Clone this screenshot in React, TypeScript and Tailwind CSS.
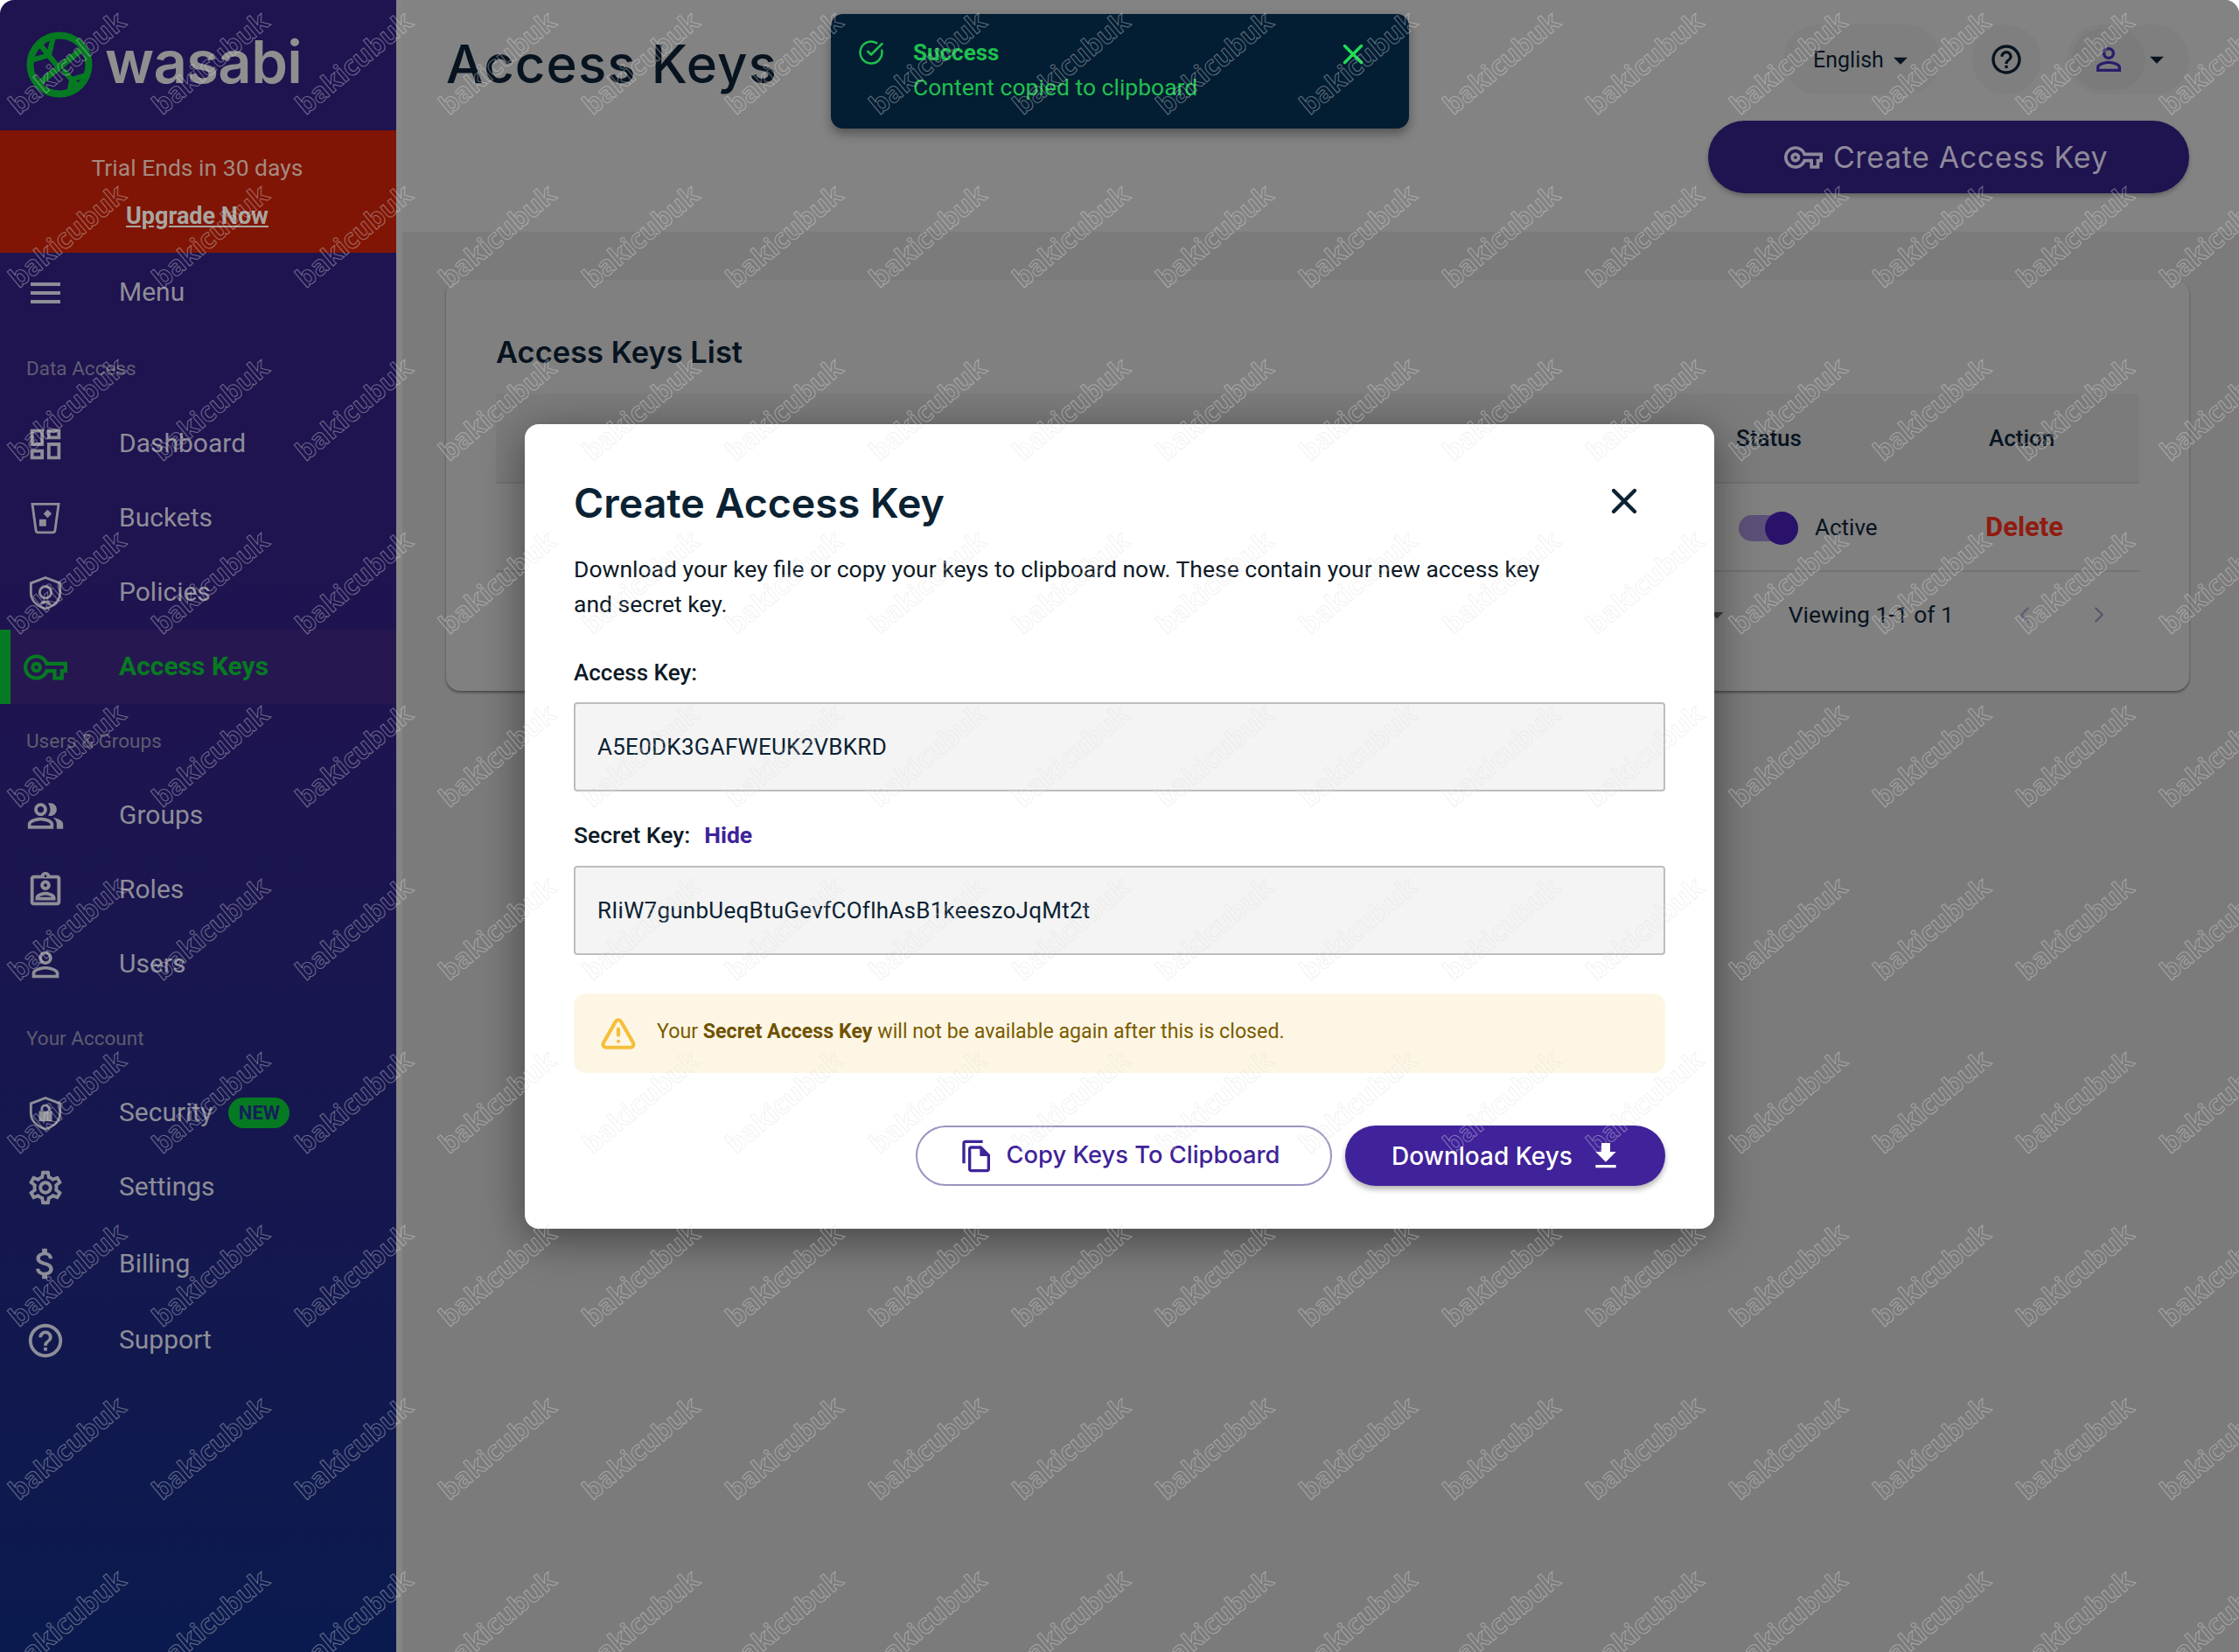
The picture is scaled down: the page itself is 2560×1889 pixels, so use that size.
import React from "react";
import { CircleCheckBig, TriangleAlert, X, ChevronLeft, ChevronRight } from "lucide-react";
import {
  MdOutlineDashboard, MdOutlinePeopleAlt, MdOutlineSettings, MdAttachMoney, MdHelpOutline,
  MdOutlineAssignmentInd, MdPersonOutline, MdOutlineVpnKey, MdOutlineFileCopy, MdFileDownload, MdArrowDropDown,
} from "react-icons/md";

const Hamburger = () => (
  <svg width="34" height="24" viewBox="0 0 34 24" fill="currentColor"><rect y="0" width="34" height="4" /><rect y="10" width="34" height="4" /><rect y="20" width="34" height="4" /></svg>
);
const Bucket = () => (
  <svg width="38" height="38" viewBox="0 0 24 24" fill="none" stroke="currentColor" strokeWidth="1.8"><path d="M2.5 1.5h19l-2.6 19a1.6 1.6 0 0 1-1.6 1.5H6.7a1.6 1.6 0 0 1-1.6-1.5z" /><path d="M13.5 5.5l3 3-3 3-3-3z" fill="currentColor" stroke="none" /><rect x="7.5" y="12.5" width="5" height="5" fill="currentColor" stroke="none" /></svg>
);
const ShieldEye = () => (
  <svg width="40" height="44" viewBox="0 0 24 24" fill="none" stroke="currentColor" strokeWidth="1.7"><path d="M12 1.5l10 3.8v6.5c0 5.4-4.2 9.2-10 11-5.800-1.800-10-5.600-10-11V5.300z" /><circle cx="12" cy="11.500" r="4" /><path d="M9 20c.5-2.500 5.500-2.500 6 0" /></svg>
);
const ShieldLock = () => (
  <svg width="40" height="46" viewBox="0 0 24 24" fill="none" stroke="currentColor" strokeWidth="1.7"><path d="M12 1.500l10 3.800v6.500c0 5.400-4.200 9.200-10 11-5.800-1.800-10-5.600-10-11V5.300z" /><rect x="7.500" y="10.500" width="9" height="7" fill="currentColor" stroke="none" /><path d="M9.500 10.500V9a2.500 2.500 0 0 1 5 0v1.500" /></svg>
);

type Item = { label: string; icon?: React.ReactNode; active?: boolean; badge?: boolean; section?: boolean; tall?: boolean; first?: boolean };
const items: Item[] = [
  { label: "Menu", icon: <Hamburger /> },
  { label: "Data Access", section: true, first: true },
  { label: "Dashboard", icon: <MdOutlineDashboard size={46} /> },
  { label: "Buckets", icon: <Bucket /> },
  { label: "Policies", icon: <ShieldEye /> },
  { label: "Access Keys", icon: <MdOutlineVpnKey size={50} />, active: true },
  { label: "Users & Groups", section: true },
  { label: "Groups", icon: <MdOutlinePeopleAlt size={44} /> },
  { label: "Roles", icon: <MdOutlineAssignmentInd size={46} /> },
  { label: "Users", icon: <MdPersonOutline size={46} /> },
  { label: "Your Account", section: true },
  { label: "Security", icon: <ShieldLock />, badge: true },
  { label: "Settings", icon: <MdOutlineSettings size={46} /> },
  { label: "Billing", icon: <MdAttachMoney size={46} />, tall: true },
  { label: "Support", icon: <MdHelpOutline size={46} /> },
];

const head = "font-['Inter',sans-serif]";

function Sidebar() {
  return (
    <aside className="w-[453px] shrink-0 flex flex-col bg-gradient-to-b from-[#1f1350] via-[#1f1350] via-35% to-[#0a1a4e] text-[#8e8e98]">
      <div className="h-[149px] flex items-center pl-[30px] gap-[14px] pb-[2px]">
        <svg width="76" height="76" viewBox="0 0 76 76" fill="none" stroke="#067a22">
          <circle cx="38" cy="38" r="33.500" strokeWidth="8" />
          <path d="M14 60L64 20" strokeWidth="7" />
          <path d="M36 40L15 14M26 27L31 6M26 27L6 33M42 44L62 66M52 55L49 72M52 55L71 49" strokeWidth="6" />
        </svg>
        <span className="font-['Inter',sans-serif] font-semibold text-[67px] leading-none text-[#8f8f8f] -mt-[6px] tracking-[-0.01em]">wasabi</span>
      </div>
      <div className="h-[140px] bg-[#801505] flex flex-col items-center text-[#a38a80] font-['Roboto',sans-serif] text-[26.5px] -ml-[2px]">
        <span className="mt-[26px] leading-[34px]">Trial Ends in 30 days</span>
        <span className="mt-[21px] leading-[34px] font-bold text-[27px] underline text-[#a9a5a0]">Upgrade Now</span>
      </div>
      <nav className="mt-[3px] flex flex-col font-['Roboto',sans-serif]">
        {items.map((it) =>
          it.section ? (
            <div key={it.label} className={`flex items-center pl-[30px] text-[22.5px] text-[#5e5c70] ${it.first ? "h-[88px] pt-[2px]" : "h-[85px]"}`}>{it.label}</div>
          ) : (
            <div key={it.label} className={`flex items-center relative text-[30px] ${it.tall ? "h-[90px]" : "h-[85px]"} ${it.active ? "bg-[#271750] text-[#067a22] font-bold" : ""}`}>
              {it.active && <span className="absolute left-0 top-0 bottom-0 w-[12px] bg-[#067a22]" />}
              <span className="w-[104px] shrink-0 flex justify-center">{it.icon}</span>
              <span className="ml-[32px] -mt-[2px]">{it.label}</span>
              {it.badge && <span className="ml-[18px] h-[35px] w-[70px] rounded-full bg-[#067a22] text-[#14205a] font-bold text-[22px] flex items-center justify-center">NEW</span>}
            </div>
          )
        )}
      </nav>
    </aside>
  );
}

function Header() {
  return (
    <header className="h-[265px] bg-[#838383] flex justify-between pl-[50px] pr-[57px]">
      <h1 className={`${head} mt-[38px] font-medium text-[60px] leading-[70px] text-[#07131f] tracking-[0.018em]`}>Access Keys</h1>
      <div className="flex flex-col items-end pt-[28px]">
        <div className="flex items-center font-['Roboto',sans-serif] text-[25px] text-[#07131f] h-[80px]">
          <div className="w-[180px] h-[80px] rounded-full bg-[#7f7f7f] flex items-center pl-[34px] pt-[2px]">English<MdArrowDropDown size={38} className="-mr-2" /></div>
          <div className="ml-[36px] w-[78px] h-[80px] rounded-full bg-[#7f7f7f] flex items-center justify-center"><MdHelpOutline size={40} /></div>
          <div className="ml-[30px] w-[140px] h-[80px] rounded-full bg-[#7f7f7f] flex items-center pl-[6px]">
            <span className="w-[84px] h-[70px] rounded-full bg-[#7b7b7b] flex items-center justify-center text-[#2a1c6b]"><MdPersonOutline size={42} /></span>
            <MdArrowDropDown size={38} className="-ml-[6px]" />
          </div>
        </div>
        <button className={`${head} mt-[30px] w-[550px] h-[83px] rounded-full bg-[#1f1350] text-[#8e8a9a] text-[34px] flex items-center justify-center gap-[12px] shadow-[0_3px_5px_rgba(0,0,0,.25)] tracking-[0.018em] pr-[6px]`}>
          <MdOutlineVpnKey size={44} />Create Access Key
        </button>
      </div>
    </header>
  );
}

function Card() {
  return (
    <section className="mt-[55px] ml-[50px] mr-[57px] h-[470px] rounded-[16px] bg-[#808080] shadow-[0_2px_3px_rgba(0,0,0,.4)] px-[57px] font-['Roboto',sans-serif] text-[#07131f]">
      <h2 className={`${head} pt-[62px] leading-[42px] text-[34.5px] font-semibold`}>Access Keys List</h2>
      <div className="mt-[26px] h-[103px] bg-[#7b7b7b] border-b-2 border-[#737373] flex justify-end items-center text-[26px] font-medium pt-[2px]">
        <span className="w-[289px]">Status</span>
        <span className="w-[172px]">Action</span>
      </div>
      <div className="h-[101px] border-b-2 border-[#737373] flex justify-end items-center text-[26px]">
        <div className="w-[289px] flex items-center pl-[3px] pt-[2px]">
          <span className="relative w-[68px] h-[30px] rounded-full bg-[#5c5078]">
            <span className="absolute right-0 -top-[4px] w-[38px] h-[38px] rounded-full bg-[#2a126b]" />
          </span>
          <span className="ml-[19px]">Active</span>
        </div>
        <span className="w-[176px] -ml-[4px] pt-[2px] text-[#8f1c10] font-bold text-[31px]">Delete</span>
      </div>
      <div className="h-[97px] flex justify-end items-center text-[26.5px]">
        <MdArrowDropDown size={36} className="text-[#3d3d3d] mr-[64px]" />
        <span>Viewing 1-1 of 1</span>
        <ChevronLeft size={30} strokeWidth={1.8} className="ml-[66px] text-[#5e5e74]" />
        <ChevronRight size={30} strokeWidth={1.8} className="ml-[55px] mr-[31px] text-[#55556c]" />
      </div>
    </section>
  );
}

function Field({ value }: { value: string }) {
  return (
    <div className="h-[102px] bg-[#f4f4f4] border-2 border-[#bdbdbd] rounded-[4px] flex items-center pl-[25px] text-[26px] text-[#0b2233] tracking-[0.01em]">{value}</div>
  );
}

function Modal() {
  return (
    <div className="absolute left-[600px] top-[485px] w-[1360px] h-[920px] bg-white rounded-[16px] shadow-[0_12px_50px_rgba(0,0,0,.45)] px-[56px] font-['Roboto',sans-serif] text-[#0e1a26]">
      <div className="flex justify-between items-center pt-[60px]">
        <h2 className={`${head} text-[46.5px] leading-[60px] font-semibold text-[#0b2233]`}>Create Access Key</h2>
        <X size={48} strokeWidth={2.2} className="mr-[23px] text-[#0b2233] -mt-[4px]" />
      </div>
      <p className="mt-[26px] w-[1130px] text-[26.5px] leading-[40px]">
        Download your key file or copy your keys to clipboard now. These contain your new access key and secret key.
      </p>
      <div className="mt-[38px] text-[26px] leading-[40px] font-medium">Access Key:</div>
      <div className="mt-[14px]"><Field value="A5E0DK3GAFWEUK2VBKRD" /></div>
      <div className="mt-[30px] text-[26.500px] leading-[40px] font-medium">Secret Key:<span className="ml-[16px] text-[#40229a] font-bold">Hide</span></div>
      <div className="mt-[15px]"><Field value="RIiW7gunbUeqBtuGevfCOflhAsB1keeszoJqMt2t" /></div>
      <div className="mt-[44px] h-[91px] rounded-[14px] bg-[#fef6e5] flex items-center pl-[30px] text-[23.200px] text-[#7a5c00] pb-[4px]">
        <TriangleAlert size={42} strokeWidth={2.4} className="text-[#f5bf3a] mt-[4px]" />
        <span className="ml-[23px]">Your <b className="font-bold text-[#6f5200]">Secret Access Key</b> will not be available again after this is closed.</span>
      </div>
      <div className="mt-[60px] flex justify-end gap-[15px]">
        <button className={`${head} w-[476px] h-[69px] rounded-full border-2 border-[#9c93c0] text-[#3f2399] text-[27.3px] flex items-center justify-center gap-[14px] font-medium pr-[10px]`}>
          <MdOutlineFileCopy size={40} />Copy Keys To Clipboard
        </button>
        <button className={`${head} w-[366px] h-[69px] rounded-full bg-[#40229a] text-white text-[28px] flex items-center justify-center gap-[18px] font-medium shadow-[0_4px_6px_rgba(0,0,0,.3)] pl-[5px]`}>
          Download Keys<MdFileDownload size={40} />
        </button>
      </div>
    </div>
  );
}

function Toast() {
  return (
    <div className="absolute left-[950px] top-[16px] w-[661px] h-[131px] rounded-[14px] bg-[#031d33] shadow-[0_6px_12px_rgba(0,0,0,.35)] flex text-[#1fc04f] font-['Roboto',sans-serif]">
      <CircleCheckBig size={30} strokeWidth={2} className="ml-[31px] mt-[29px]" />
      <div className="ml-[33px] flex-1">
        <div className="mt-[27px] text-[26px] leading-[34px] font-bold">Success</div>
        <div className="mt-[6px] text-[26.500px] leading-[34px]">Content copied to clipboard</div>
      </div>
      <X size={38} strokeWidth={2.2} className="mt-[27px] mr-[45px] text-[#22dd55]" />
    </div>
  );
}

function Watermarks() {
  const cells = Array.from({ length: 160 }, (_, i) => i);
  return (
    <div aria-hidden className="absolute -left-[6px] -top-[28px] grid grid-cols-[repeat(16,164px)] auto-rows-[198px] pointer-events-none">
      {cells.map((i) => (
        <div key={i} className="h-[198px] w-[164px] flex items-center justify-center">
          <span className="-rotate-[40deg] font-['Open_Sans',sans-serif] font-bold text-[31px] text-transparent whitespace-nowrap [-webkit-text-stroke:1px_rgba(225,225,225,0.42)]">bakicubuk</span>
        </div>
      ))}
    </div>
  );
}

export default function App() {
  return (
    <div className="relative w-[2560px] h-[1889px] overflow-hidden bg-white">
      <div className="flex h-full rounded-t-[16px] overflow-hidden">
        <Sidebar />
        <main className="flex-1 flex flex-col bg-[#7b7b7b] border-l-[7px] border-[#858585]">
          <Header />
          <Card />
        </main>
      </div>
      <Modal />
      <Toast />
      <Watermarks />
    </div>
  );
}
